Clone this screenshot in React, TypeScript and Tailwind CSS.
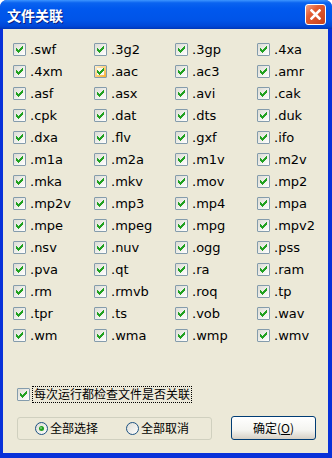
import React from "react";

const exts = [
  ".swf", ".3g2", ".3gp", ".4xa",
  ".4xm", ".aac", ".ac3", ".amr",
  ".asf", ".asx", ".avi", ".cak",
  ".cpk", ".dat", ".dts", ".duk",
  ".dxa", ".flv", ".gxf", ".ifo",
  ".m1a", ".m2a", ".m1v", ".m2v",
  ".mka", ".mkv", ".mov", ".mp2",
  ".mp2v", ".mp3", ".mp4", ".mpa",
  ".mpe", ".mpeg", ".mpg", ".mpv2",
  ".nsv", ".nuv", ".ogg", ".pss",
  ".pva", ".qt", ".ra", ".ram",
  ".rm", ".rmvb", ".roq", ".tp",
  ".tpr", ".ts", ".vob", ".wav",
  ".wm", ".wma", ".wmp", ".wmv",
];

/* ---------------- XP CHECKBOX ---------------- */
const Check = ({ hot = false }: { hot?: boolean }) => (
  <svg width="13" height="13" viewBox="0 0 13 13" className="shrink-0">
    <defs>
      <linearGradient id="cbg" x1="0" y1="0" x2="1" y2="1">
        <stop offset="0" stopColor="#dcdcd4" />
        <stop offset="1" stopColor="#ffffff" />
      </linearGradient>
      <linearGradient id="cbh" x1="0" y1="0" x2="1" y2="1">
        <stop offset="0" stopColor="#fff0cf" />
        <stop offset="1" stopColor="#f8b030" />
      </linearGradient>
    </defs>
    <rect x="0.5" y="0.5" width="12" height="12" fill="#1c5180" />
    <rect x="1" y="1" width="11" height="11" fill={hot ? "url(#cbh)" : "url(#cbg)"} />
    {hot && <rect x="3" y="3" width="7" height="7" fill="#f9f8f0" />}
    <path
      d="M3 5h1v1h1v1h1v-1h1v-1h1v-1h1v-1h1v3h-1v1h-1v1h-1v1h-1v1h-1v-1h-1v-1h-1z"
      fill="#21a121"
    />
  </svg>
);

/* ---------------- XP RADIO ---------------- */
const Radio = ({ on = false }: { on?: boolean }) => (
  <svg width="13" height="13" viewBox="0 0 13 13" className="shrink-0">
    <defs>
      <linearGradient id="rbg" x1="0" y1="0" x2="1" y2="1">
        <stop offset="0" stopColor="#dcdcd4" />
        <stop offset="1" stopColor="#ffffff" />
      </linearGradient>
    </defs>
    <circle cx="6.5" cy="6.5" r="6" fill="url(#rbg)" stroke="#1c5180" strokeWidth="1" />
    {on && (
      <>
        <circle cx="6.5" cy="6.5" r="2.5" fill="#21a121" />
        <circle cx="6" cy="6" r="1" fill="#7fd07f" />
      </>
    )}
  </svg>
);

export default function App() {
  return (
    <div className="w-[332px] h-[458px] flex flex-col bg-[#0831d9] rounded-t-[7px] overflow-hidden">
      {/* TITLE BAR */}
      <div className="h-[29px] shrink-0 flex items-center justify-between pl-[7px] pr-[6px] bg-[linear-gradient(to_bottom,#3d95ff_0%,#0a63f0_10%,#0058ee_30%,#0054e8_70%,#0048d8_90%,#0037b8_100%)]">
        <span
          className="text-[14px] font-bold text-white leading-none [text-shadow:1px_1px_0_#0a1e80]"
          style={{ fontFamily: '"Noto Sans CJK SC", sans-serif' }}
        >
          文件关联
        </span>
        <div className="w-[21px] h-[21px] rounded-[3px] border border-white flex items-center justify-center bg-[linear-gradient(135deg,#f2a48c_0%,#e35d34_35%,#c7401a_100%)]">
          <svg width="11" height="11" viewBox="0 0 11 11">
            <path d="M1.5 1.5l8 8M9.5 1.5l-8 8" stroke="#fff" strokeWidth="2.6" strokeLinecap="square" />
          </svg>
        </div>
      </div>

      {/* BODY */}
      <div
        className="flex-1 ml-[3px] mr-[4px] mb-[5px] bg-[#ece9d8] flex flex-col text-black"
        style={{ fontFamily: '"DejaVu Sans", Verdana, sans-serif' }}
      >
        <div className="grid grid-cols-[81px_81px_82px_81px] pl-[10px] pt-[9px]">
          {exts.map((e) => (
            <div key={e} className="h-[22px] flex items-center gap-[4px]">
              <Check hot={e === ".aac"} />
              <span className="text-[13px] leading-none">{e}</span>
            </div>
          ))}
        </div>

        <div
          className="mt-[38px] ml-[14px] h-[20px] flex items-center gap-[2px] text-[12px]"
          style={{ fontFamily: '"Noto Sans CJK SC", sans-serif' }}
        >
          <Check />
          <span className="h-[17px] px-[1px] flex items-center border border-dotted border-black leading-none">
            每次运行都检查文件是否关联
          </span>
        </div>

        <div
          className="mt-[12px] flex items-center text-[12px]"
          style={{ fontFamily: '"Noto Sans CJK SC", sans-serif' }}
        >
          <div className="ml-[14px] w-[195px] h-[23px] rounded-[3px] border border-[#d0d0bf] flex items-center pl-[17px]">
            <Radio on />
            <span className="ml-[2px] leading-none">全部选择</span>
            <span className="ml-[28px]">
              <Radio />
            </span>
            <span className="ml-[2px] leading-none">全部取消</span>
          </div>
          <div className="ml-[19px] w-[85px] h-[24px] rounded-[3px] border border-[#003c74] flex items-center justify-center bg-[linear-gradient(to_bottom,#ffffff_0%,#f4f4f0_60%,#d6d0c5_100%)]">
            <span className="leading-none">
              确定(<span className="underline">O</span>)
            </span>
          </div>
        </div>
      </div>
    </div>
  );
}
